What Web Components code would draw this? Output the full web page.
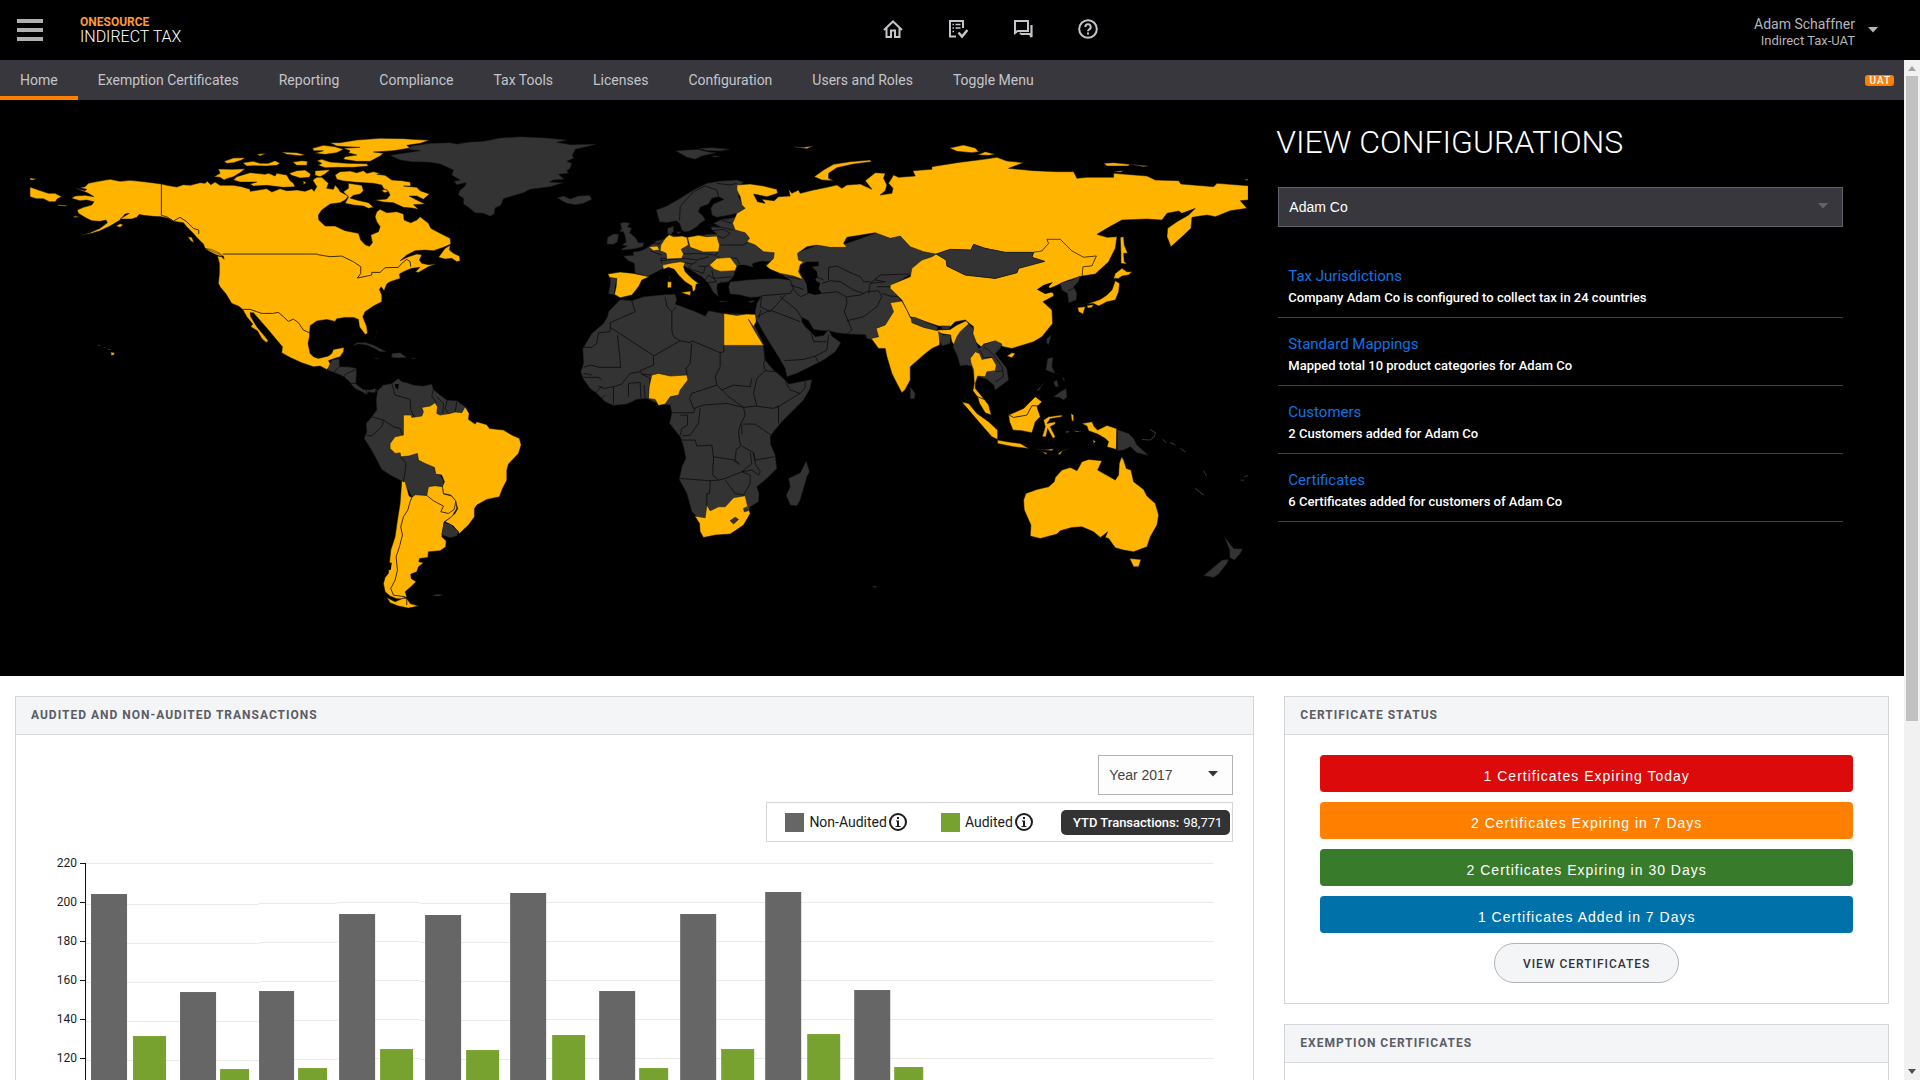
<!DOCTYPE html>
<html lang="en">
<head>
<meta charset="utf-8">
<title>ONESOURCE Indirect Tax</title>
<style>
html,body{margin:0;height:100%;background:#fff}
body{font-family:Roboto,"Liberation Sans",sans-serif;font-size:14px;color:#222}
</style>
</head>
<body>
<tax-app></tax-app>
<script>
const define = (name, html) => {
  const t = document.createElement('template');
  t.innerHTML = '<style>*{box-sizing:border-box}</style>' + html;
  customElements.define(name, class extends HTMLElement {
    constructor() {
      super();
      this.attachShadow({mode: 'open'}).append(t.content.cloneNode(true));
    }
  });
};

/* Icon button used in the top bar */
define('icon-button', `
<style>
:host{display:block}
button{display:block;width:20px;height:20px;padding:0;border:0;background:none;color:#c3c5cb}
</style>
<button type="button"><slot></slot></button>`);

define('top-bar', `
<style>
:host{display:block;background:#000;color:#b4b6bc}
header{display:grid;grid-template-columns:1fr auto 1fr;align-items:center;height:60px;padding:0 42px 0 17px}
.left{display:flex;align-items:center;gap:37px}
.menu{display:flex;flex-direction:column;justify-content:space-between;width:26px;height:22px;padding:0;border:0;background:none}
.menu i{display:block;height:4px;background:#b0b0b0}
.brand{display:flex;flex-direction:column}
.brand b{font-size:12px;line-height:14px;color:#ff9933}
.brand span{font-size:16px;font-weight:300;line-height:16px;color:#fff}
nav{display:flex;gap:45px;padding:0 0 2px 85px}
.user{justify-self:end;display:flex;align-items:center;gap:13px;padding:0;border:0;background:none;color:inherit;font:inherit;text-align:right}
.user div{padding-top:4px}
.user span{display:block;font-size:14px;line-height:18px}
.user small{display:block;font-size:13px;line-height:16px}
svg{display:block}
</style>
<header>
 <div class="left">
  <button class="menu" type="button" aria-label="Menu"><i></i><i></i><i></i></button>
  <div class="brand"><b>ONESOURCE</b><span>INDIRECT TAX</span></div>
 </div>
 <nav aria-label="Tools">
  <icon-button><svg width="20" height="20" viewBox="0 0 20 20" fill="none" stroke="currentColor" stroke-width="2"><path d="M1 11 10 2.5l9 8.500M3.500 9v9H8v-6.500h4V18h4.500V9"/></svg></icon-button>
  <icon-button><svg width="20" height="20" viewBox="0 0 20 20" fill="none" stroke="currentColor" stroke-width="2"><path d="M15 9V2H2v15.500h6"/><path d="M10.500 13.500l3.500 4L19.500 11" stroke-width="2.500"/><path d="M4.500 5.500h1.500m1.500 0h5M4.500 9h1.500m1.500 0h5M4.500 12.500h1.500" stroke-width="1.500"/></svg></icon-button>
  <icon-button><svg width="20" height="20" viewBox="0 0 20 20" fill="none" stroke="currentColor" stroke-width="2"><path d="M2 11.500V2h13v10H4.500L2 14z"/><path d="M18.500 6v10M8 15h9l1.500 3v-4M8 15l-1-1" stroke-width="2.200"/></svg></icon-button>
  <icon-button><svg width="20" height="20" viewBox="0 0 20 20" fill="none" stroke="currentColor" stroke-width="2"><circle cx="10" cy="10" r="8.800"/><path d="M7.300 8a2.700 2.700 0 1 1 4 2.300c-.9.500-1.300.9-1.300 2M10 13.500v2"/></svg></icon-button>
 </nav>
 <button class="user" type="button">
  <div><span>Adam Schaffner</span><small>Indirect Tax-UAT</small></div>
  <svg width="10" height="6" viewBox="0 0 10 6"><path d="M0 0h10L5 5.500z" fill="#b4b6bc"/></svg>
 </button>
</header>`);

define('main-nav', `
<style>
:host{display:block;background:#37373d}
nav{display:flex;align-items:center;height:40px;padding-right:10px}
a{display:block;height:40px;padding:0 20px;font-size:14px;line-height:40px;color:#c4c5ca;text-decoration:none;white-space:nowrap}
a.on{box-shadow:inset 0 -4px #ff8000}
span{margin-left:auto;padding:0 3px 0 4px;border-radius:3px;background:#ff8000;color:#fff;font-size:10px;font-weight:500;line-height:11px;letter-spacing:1px}
</style>
<nav aria-label="Main">
 <a class="on" href="#">Home</a><a href="#">Exemption Certificates</a><a href="#">Reporting</a><a href="#">Compliance</a><a href="#">Tax Tools</a><a href="#">Licenses</a><a href="#">Configuration</a><a href="#">Users and Roles</a><a href="#">Toggle Menu</a>
 <span>UAT</span>
</nav>`);

/* World map. Units are thirds of a pixel; each region has its own origin. */
define('world-map', `
<style>
:host{display:block}
svg{display:block;width:100%;height:auto}
.y{fill:#ffb400}.g{fill:#333}.k{fill:#000}
.y,.g{stroke:#111;stroke-width:1.500}
.l{fill:none;stroke:#0b0b0b;stroke-width:2.400;stroke-linejoin:round}
.t{fill:none;stroke:#333;stroke-width:3}
</style>
<svg viewBox="90 300 3654 1728" role="img" aria-label="World map of configured countries">
<g transform="translate(60 360)">
<path class="y" d="M166,204L195,212 200,208 180,203 195,200 205,190 235,184 270,178 300,184 330,181 360,184 395,188 424,192 440,196 470,201 490,194 510,196 540,188 555,190 562,184 572,194 585,186 600,196 640,196 665,200 690,208 690,214 715,210 740,206 755,216 780,206 800,212 830,210 855,214 875,206 882,214 890,200 878,180 890,172 905,172 925,190 920,205 940,208 945,196 955,206 960,215 985,228 975,240 960,248 930,252 905,270 895,285 896,300 915,318 945,318 975,332 1015,340 1022,360 1035,374 1048,379 1057,368 1052,345 1075,335 1080,320 1070,305 1065,290 1070,275 1080,268 1100,278 1130,275 1150,282 1152,300 1172,308 1190,300 1200,290 1225,310 1232,325 1260,340 1290,355 1292,372 1270,382 1240,392 1215,390 1185,392 1160,405 1140,422 1165,410 1190,402 1205,404 1198,420 1205,430 1225,434 1247,432 1225,440 1195,457 1186,455 1200,442 1175,445 1150,455 1138,462 1140,475 1110,485 1100,492 1092,512 1083,500 1078,508 1085,525 1085,545 1060,558 1035,575 1028,590 1040,620 1042,640 1035,643 1018,620 1015,598 1000,592 975,592 950,596 945,604 920,598 890,603 870,617 868,650 864,670 870,700 880,710 895,715 925,708 935,700 940,688 972,682 970,695 960,710 940,716 925,722 935,738 920,748 900,738 880,740 845,728 810,712 785,698 787,680 770,660 745,630 715,595 700,578 690,578 692,590 710,620 735,650 745,663 738,667 725,655 712,632 692,620 698,612 680,590 668,568 655,558 635,550 618,522 600,500 595,490 598,460 598,430 592,408 605,410 612,418 610,408 580,395 555,385 550,372 540,362 530,352 515,335 500,320 490,308 460,304 445,295 424,290 400,289 370,286 358,283 350,292 335,297 300,297 328,280 315,282 300,300 270,318 240,332 215,340 183,346 210,338 240,325 262,308 258,300 240,304 215,302 200,295 175,280 172,270 190,262 215,255 222,245 200,240 180,242 155,235 165,228 195,226 222,230 205,220Z
M30,201L55,210 85,220 105,220 125,230 112,236 106,245 88,245 70,236 50,236 30,230ZM30,174L48,176 40,180 30,180ZM112,254L138,256 140,259 115,257ZM160,288L178,290 165,293ZM288,318L300,311 310,314 300,322ZM503,350L515,352 522,368 512,362ZM555,386L575,388 600,400 607,410 590,405 570,395ZM1255,412L1275,385 1290,376 1288,390 1300,400 1318,408 1320,422 1310,425 1295,415 1275,417Z
M272,696L283,698 282,705 274,706ZM262,686L272,688 268,690ZM234,674L240,676 236,678ZM250,681L256,683 254,684Z
M930,68L960,68 1010,60 1080,55 1150,56 1228,61 1200,70 1160,76 1170,84 1120,92 1060,96 1090,100 1080,108 1050,124 1010,124 970,118 975,110 1010,105 985,98 990,92 970,85 1020,82 980,80 950,78Z
M878,85L910,76 945,80 970,88 950,98 915,103 885,100 910,92 880,92ZM905,118L930,126 980,130 1040,131 1045,138 1000,142 950,142 915,143 895,136 905,130 890,122Z
M595,147L640,148 675,146 660,158 640,170 620,176 612,180 600,172 582,170 600,160ZM640,180L650,170 690,158 735,163 745,160 765,168 770,160 800,165 810,182 820,190 825,200 790,202 740,196 700,198 690,192 710,186 660,186Z
M668,128L700,124 720,130 745,130 765,122 780,130 770,136 740,138 700,137 680,138ZM612,124L640,114 675,113 665,120 640,128 620,130ZM710,103L738,100 720,108ZM785,96L830,98 855,104 840,107 800,103ZM818,126L845,122 862,124 860,136 830,136ZM808,160L830,152 855,150 872,162 868,172 840,174 815,166ZM885,152L930,149 915,162 900,170 885,166ZM850,182L858,188 850,194Z
M945,165L960,155 990,153 1010,158 1030,152 1040,160 1060,155 1080,160 1070,163 1095,166 1115,180 1145,182 1170,186 1172,198 1150,198 1190,202 1200,212 1228,222 1210,238 1190,228 1167,228 1190,240 1215,252 1180,254 1195,268 1175,264 1150,262 1120,248 1090,246 1065,240 1100,237 1110,225 1105,215 1090,205 1085,195 1060,190 1010,187 970,183 950,178Z
M985,190L1000,192 1025,196 1030,212 1020,222 1000,226 990,234 1010,240 1045,248 1060,262 1045,265 1030,258 1000,255 975,250 985,232 970,215 985,205ZM1085,210L1100,208 1105,215 1092,218Z"/>
<path class="l" d="M424,192V286L440,290 460,303 480,292 500,305 520,325 536,330 536,342M608,402H890L895,404 930,410 965,408 1000,425 1022,440 1022,460 1012,474 1055,465 1055,457 1080,457 1095,443 1135,442 1145,430 1160,418 1170,425 1172,440M668,568L690,568 725,580 758,580 775,577 790,590 805,604 820,597 835,608 850,630 868,638"/>
<path class="g" d="M997,677L1010,668 1035,667 1060,675 1085,688 1100,695 1080,695 1065,686 1040,675 1015,672ZM1115,700L1140,698 1160,712 1135,714 1115,712ZM1063,713L1078,716 1068,717ZM1175,713L1188,716 1176,717ZM1068,628L1072,640ZM1062,645L1068,655Z"/>
</g>
<g transform="translate(1020 360)">
<path class="g" d="M150,106L200,98 240,92 200,88 215,78 270,70 330,68 350,72 390,66 430,64 480,54 540,50 620,54 680,60 650,67 690,74 770,72 740,80 705,88 697,105 700,115 680,124 695,130 690,145 680,152 685,160 655,163 672,178 640,180 628,186 670,188 630,200 570,208 550,218 490,236 482,256 465,264 462,282 450,289 430,280 405,278 385,262 370,252 370,235 355,225 358,212 375,198 378,188 350,194 342,184 360,180 335,165 340,150 300,132 270,127 215,125 180,120ZM652,233L670,228 690,237 715,228 748,226 755,238 730,250 705,254 680,250 665,242Z
M-25,720L-2,716 -2,740 25,740 50,745 47,790 55,798 70,808 90,810 105,805 112,812 100,818 85,815 80,824 65,815 45,805 35,795 28,785 12,770 -10,760 -38,750Z
M112,812L130,795 155,790 175,775 185,785 200,788 220,795 250,798 275,792 280,808 300,825 320,840 350,842 375,860 385,890 300,900 250,1000 310,1080 310,1110 260,1125 215,1130 205,1110 185,1083 150,1065 125,1048 105,1010 85,975 72,955 80,935 78,910 95,890 110,870 108,840ZM277,1428L290,1422 308,1425 300,1428Z"/>
<path class="y" d="M185,1083L195,1085 207,1128 215,1132 225,1124 260,1126 265,1100 285,1097 307,1100 310,1122 335,1128 347,1142 350,1165 335,1190 312,1205 308,1230 305,1250 318,1262 317,1280 300,1292 265,1295 263,1312 238,1315 236,1325 250,1328 235,1340 230,1355 212,1362 213,1375 228,1385 212,1400 195,1415 200,1430 185,1436 170,1436 150,1428 135,1415 130,1390 135,1372 145,1360 148,1330 152,1290 165,1250 172,1200 180,1150ZM140,1432L165,1445 190,1434 200,1435 210,1450 235,1458 205,1464 175,1458 150,1448Z
M190,885L213,885 215,892 245,888 250,875 245,862 270,858 285,848 292,860 290,880 300,885 330,880 345,876 365,878 375,860 387,880 385,898 405,912 410,905 440,914 448,925 490,930 515,945 538,955 543,975 535,1000 505,1032 500,1050 500,1080 485,1110 478,1130 440,1138 410,1155 403,1165 403,1190 385,1215 358,1240 340,1218 315,1205 345,1180 353,1165 345,1140 332,1125 310,1120 307,1100 313,1085 305,1065 287,1062 283,1042 255,1030 235,1020 232,1000 205,1008 182,1010 180,998 165,1000 150,985 150,970 165,950 190,945Z"/>
<path class="g" d="M312,1207L330,1212 356,1235 350,1248 330,1253 305,1245Z"/>
<path class="k" d="M165,792L176,792 174,808 166,803ZM145,1328L155,1328 152,1350 142,1348Z"/>
<path class="l" d="M215,1132L210,1145 203,1170 190,1190 182,1220 187,1245 178,1280 168,1310 172,1350 165,1380 152,1405 160,1425 195,1430M260,1126L280,1142 310,1158 302,1175 325,1180 342,1168 347,1145M200,1435V1455M155,790L165,825 210,838 212,870 222,890M280,808L275,828 290,850M290,830L310,850 308,880M322,840L315,865 325,880M350,845L345,876M95,890L130,900 160,920 180,925 187,943M130,900L125,920 95,948 80,945M182,1010L198,1030 195,1055 190,1085M-2,740L-20,758M50,748L20,760 10,772M30,790L48,790M78,808L80,820M108,806L106,818"/>
</g>
<g transform="translate(1710 390)">
<path class="g" d="M150,280L165,277 180,280 172,290 185,295 178,308 195,322 205,338 222,338 218,350 195,356 160,360 152,358 172,348 155,346 168,336 165,320 160,305 148,305 155,295ZM112,322L130,312 145,312 142,335 130,343 110,342Z
M258,240L290,228 330,205 370,180 410,160 450,153 500,150 520,156 510,165 505,200 525,235 500,250 480,255 440,262 425,255 422,235 430,222 462,208 445,200 425,205 415,222 390,232 385,245 400,260 405,270 390,280 378,292 360,302 345,306 335,300 328,280 318,272 290,278 268,275ZM292,295L310,288 310,305 300,315 292,310ZM318,305L332,305 325,312Z
M316,62L350,60 385,58 415,66 440,68 395,78 375,88 350,82ZM385,55L430,53 480,58 450,63 410,62ZM422,77L450,78 435,82Z
M160,378L190,376 188,366 215,362 235,350 250,340 260,332 280,328 290,330 295,314 330,320 350,322 385,320 410,313 440,312 425,300 422,290 450,290 430,280 455,268 480,265 500,260 540,330 620,370 690,365 740,345 830,340 920,308 990,318 1100,370 1025,430 960,470 1000,520 960,600 905,630 890,625 885,614 830,612 800,608 775,602 760,602 730,598 715,572 695,562 695,575 705,590 722,605 735,620 760,616 775,598 785,618 812,638 795,665 760,690 720,710 680,730 650,740 645,715 625,680 590,625 570,590 556,565 555,545 560,520 572,500 540,502 510,495 480,492 475,470 480,455 530,450 570,447 620,445 660,450 630,430 600,415 585,405 600,395 575,393 555,398 545,402 550,412 525,405 505,405 495,420 490,440 475,455 455,458 442,460 440,475 445,500 428,485 418,465 405,450 395,440 370,425 345,410 320,402 280,415 255,428 230,440 205,432 195,430 192,400 175,392ZM120,442L140,445 135,470 132,493 115,492 120,465ZM296,438L301,440 299,450ZM448,512L475,514 450,516ZM532,515L555,510 545,518Z
M150,508L185,512 220,500 270,495 315,492 320,510 315,522 350,535 370,542 405,558 415,542 460,550 530,552 556,553 545,570 560,600 580,640 585,690 610,720 640,745 655,762 725,748 720,775 700,810 665,845 635,875 610,905 600,920 602,945 615,975 620,1015 590,1045 560,1070 567,1090 565,1115 540,1130 535,1150 500,1200 410,1215 385,1165 365,1145 350,1090 327,1048 335,1010 347,985 340,950 330,920 298,880 305,848 300,825 265,822 230,805 200,808 170,822 130,826 105,815 80,790 60,775 38,745 32,725 40,700 38,655 65,610 100,580 112,560 115,545Z
M708,993L718,1025 710,1040 690,1110 680,1127 660,1125 648,1095 660,1070 655,1045 690,1028ZM1020,770L1035,790 1033,806 1020,806Z"/>
<path class="k" d="M690,405L710,395 745,395 745,408 725,410 740,425 742,440 735,450 750,460 745,475 755,490 735,495 712,488 710,465 700,445 688,425Z"/>
<path class="l" d="M328,272L330,230 345,212 370,185 405,168 440,180 445,200M440,160L480,165 500,160M425,290L455,292 490,300M425,302L460,298 480,310 460,325 442,318M455,270L485,280M445,345L520,345 535,335M445,365L435,375 450,385M340,372L380,370 410,372 435,375M270,392L310,388 345,385 380,390 415,380M275,400L272,385 288,385M345,398L365,402 380,395M365,402L355,415 400,430 405,410 385,408M405,410L420,405M405,450L415,435 430,445 440,455 410,458M425,420L430,445 490,440M262,348L275,330M240,362L275,375M250,340L270,340M480,382L500,385 508,402M460,458L450,455M660,450L670,475 660,490 575,497M650,440L690,448M660,465L700,478M575,497L570,530M570,530L600,545 645,495M560,560L590,545 600,540 690,575M572,540L565,565M630,500L680,540 695,565M670,478L690,500 715,490M755,490L800,485 828,500 830,520 822,545 845,600 830,612M830,500L870,495 890,485 925,482 935,500 920,530 880,560 830,572M935,490L960,498 990,500M775,450V412L800,408 850,432 870,440 880,455 900,455M755,460L780,452 810,455 850,480 880,490M895,490L900,460 930,435 1015,432M900,460L945,455 915,450 920,445M920,470L960,470M740,440L760,450M642,692L700,688 735,678 770,660 775,615M735,678L745,698M722,605L730,635 770,635
M185,512L195,545 150,565 120,578V605L85,608 80,640 65,652H38M120,592L240,670 250,678 330,632 360,638M142,615L152,712H90L60,705 40,712M285,500L290,530 305,545 305,600 310,620 330,632M305,545L318,530M360,638L365,632 450,668 461,665V646M365,640L360,700 348,715 350,735M450,668V710L435,740 440,765 365,790 358,805 370,835M250,678V705L210,722 215,732 245,735M210,725L180,730 160,755 155,762 130,770M215,732L240,745 235,805M175,800V760L210,757 212,805M222,765L225,805M60,775L40,770M38,742H85L95,750M40,730L65,735M85,768L100,775 130,770 130,822M75,790L95,768M95,805L105,795M440,765L455,780 490,765 540,770 545,745M455,780L475,800 520,832 555,828 610,835 625,828V880M580,646L585,690 580,700 585,722 560,745 550,790 560,828M585,722L620,725 640,745M645,755L660,780 690,790 620,832M690,790L705,772V755M370,835L400,825 470,820 520,832 525,855 510,885 505,905 510,945 550,968 555,990 612,980M520,882L555,882 602,915M305,848H370L375,835M330,855L352,855 352,885 335,895 330,915M390,835L385,880 360,915 335,918M332,930L375,930 380,948 425,945 430,980 495,990 498,958 510,950M430,980V1000H428V1035L445,1050 420,1052 327,1045M495,990L508,1002 490,992M445,1050L465,1045 515,1025 545,1020 565,1035 570,1025 555,1000 550,968M465,1050L495,1090 520,1095 540,1060V1035L515,1025M420,1052L418,1090H410V1160M540,968L545,1000 515,1025M515,882L515,912"/>
<path class="y" d="M113,432L150,426 190,430 237,440 215,450 205,470 185,495 150,503 133,493 138,470 140,445 118,442ZM277,405L300,400 330,395 345,398 340,410 345,425 365,445 385,460 392,460 378,462 375,480 368,485 365,468 345,455 325,435 312,418 295,412 280,418ZM333,487L362,483 360,496 345,492ZM292,455L304,455 303,472 292,474Z
M272,345L285,325 297,314 310,320 335,318 350,322 355,345 333,358 340,372 335,385 290,387 288,370 270,362ZM235,350L262,348 268,360 250,362ZM352,322L385,316 408,320 440,318 448,345 445,365 400,366 360,352ZM418,405L440,385 480,382 500,408 495,422 450,424 432,418Z
M461,550L500,556 530,552 556,553 558,575 550,590 535,568 552,600 580,646 461,646ZM245,735L265,730 300,738 350,735 353,750 330,780 325,795 300,800 285,822 265,826 255,808 235,805 237,770ZM374,1158L405,1163 410,1125 420,1142 445,1130 465,1130 490,1103 525,1097 532,1128 540,1150 520,1185 480,1212 435,1215 400,1222 390,1205 388,1180Z
M500,165L540,162 580,168 620,178 622,190 590,200 550,192 562,215 585,220 575,208 612,212 625,200 660,198 655,178 665,190 685,180 690,190 730,180 770,172 800,165 815,175 830,165 870,162 905,178 895,165 885,152 915,128 945,130 940,145 950,165 945,182 930,195 965,190 968,175 955,160 970,135 985,142 1035,138 1028,122 1085,118 1085,110 1160,98 1240,88 1280,82 1310,93 1360,98 1315,115 1390,122 1460,125 1510,125 1520,145 1550,142 1630,142 1630,130 1730,138 1755,150 1825,152 1832,162 1930,170 1940,160 2034,167 2034,210 2010,212 2030,235 1980,242 1935,260 1910,255 1865,262 1862,295 1830,325 1802,350 1790,320 1792,295 1820,275 1855,255 1875,235 1835,250 1825,243 1790,250 1775,270 1730,267 1655,270 1615,292 1580,313 1610,322 1640,320 1635,355 1615,395 1575,432 1535,438 1538,410 1565,407 1578,378 1540,382 1505,363 1470,328 1430,328 1435,340 1415,363 1390,367 1305,367 1245,355 1210,343 1202,360 1140,358 1098,372 1060,365 1020,350 990,318 960,325 915,308 830,322 820,340 830,352 780,352 740,345 710,350 682,370 685,390 700,395 690,405 685,425 698,448 670,438 630,430 600,418 588,408 610,385 612,368 580,365 555,345 530,335 538,325 525,308 495,300 487,280 500,250 525,235 515,225 510,200 500,180Z
M732,140L760,120 790,103 840,95 900,90 903,95 850,102 800,113 775,130 775,145 790,152 755,150ZM670,50L700,52 728,48 710,56Z"/>
<path class="g" d="M480,1172L495,1161 505,1168 490,1182ZM520,1135L530,1130 535,1142 522,1145Z"/>
</g>
<g transform="translate(2580 360)">
<path class="y" d="M228,402L258,420 260,438 315,465 405,475 470,458 475,445 553,424 515,412 520,397 545,393 565,370 560,358 600,358 635,393 670,412 708,408 695,437 668,440 665,468 620,482 580,500 560,508 580,520 580,528 548,545 575,570 577,610 545,650 520,665 455,685 430,680 400,665 370,672 365,682 345,665 335,640 340,620 315,600 285,605 270,620 235,618 150,590 135,560 125,540 90,505 90,495 150,470 155,445 185,420 215,410ZM440,708L455,698 465,700 455,713Z
M760,475L765,460 785,445 800,455 815,455 805,465 785,468 775,475ZM765,482L778,490 775,515 765,540 740,545 715,558 700,550 680,552 720,538 740,525 755,510ZM652,562L675,560 668,582 655,575ZM680,556L700,554 695,562 682,564ZM780,352L790,350 792,375 802,400 790,400 792,425 800,432 782,430 782,400Z
M90,548L125,543 140,570 150,592 160,600 232,630 270,628 290,615 318,602 328,615 300,640 285,680 275,665 270,645 240,640 238,675 215,685 190,705 150,740 150,780 135,808 125,818 110,790 95,760 80,710 75,685 55,685 33,655 55,650 48,625 75,615 100,575Z"/>
<path class="g" d="M228,402L270,388 332,390 340,373 375,385 435,397 520,397 515,412 553,424 475,445 470,458 405,475 315,465 260,438 258,420ZM600,490L635,480 660,468 655,485 640,500 650,520 648,540 625,548 622,520 605,510ZM560,655L573,645 565,675 558,668ZM152,592L165,592 200,607 232,620 232,632 190,622 155,608ZM243,618L270,618 268,628 245,627ZM235,635L250,645 272,645 270,670 255,675 245,678 238,660Z
M278,680L290,650 300,635 325,612 340,625 338,640 355,685 375,672 405,662 425,672 420,685 405,700 440,745 445,780 425,795 405,810 400,795 380,778 355,770 345,790 335,740 320,735 300,738 290,705Z
M770,928L805,940 820,955 830,975 865,1006 830,998 810,980 790,990 770,992ZM562,715L578,712 575,740 585,760 600,765 570,755 557,750ZM580,785L590,780 595,800 585,800ZM605,770L612,775 612,785ZM580,830L600,815 618,805 620,830 610,840 598,832ZM530,810L552,788 535,812ZM608,990L628,985 610,993ZM497,855L510,848 505,858Z
M1092,1250L1112,1275 1120,1285 1147,1287 1140,1300 1122,1320 1108,1312 1108,1290ZM1105,1318L1100,1330 1075,1362 1060,1372 1030,1366 1050,1350 1085,1320ZM36,1397L52,1400 42,1404ZM1138,1080L1150,1078 1150,1084Z"/>
<path class="t" d="M845,958L870,960 882,950 885,938 870,928M1005,1105L1030,1125M1152,1070L1164,1066M908,958L918,968M930,968L945,974M960,985L975,996M1030,1052L1038,1066"/>
<path class="y" d="M330,715L345,695 358,700 365,718 395,712 408,735 405,752 380,755 375,770 352,768 345,790 345,805 370,835 385,855 393,885 375,878 358,850 352,830 338,812 342,790 340,750 332,728ZM305,846L325,850 350,880 385,905 412,930 412,958 395,950 360,910 330,875ZM412,960L440,965 480,970 505,985 460,980 412,970ZM525,986L550,990 580,986 575,992 555,990ZM592,1002L608,990 600,1003ZM545,995L560,998 558,1003Z
M445,885L490,865 525,830 545,845 530,860 540,890 525,905 515,938 485,932 458,930 448,905ZM550,900L565,890 605,885 605,890 570,896 560,910 585,905 585,912 570,920 585,950 578,955 562,925 557,950 546,950 555,920ZM632,880L640,885 640,905 634,900ZM617,934L628,934 620,938ZM640,932L662,934 650,936ZM665,910L695,905 702,920 712,930 740,916 770,926 768,988 740,980 745,965 735,955 712,942 685,932 680,918ZM698,958L706,965 700,970Z
M497,1120L530,1108 565,1100 582,1085 585,1072 605,1050 630,1042 650,1052 665,1025 685,1018 725,1022 712,1050 765,1080 775,1065 777,1030 784,1010 790,1020 798,1045 812,1050 820,1085 850,1108 860,1128 885,1150 895,1185 890,1215 870,1250 860,1280 820,1295 790,1290 765,1283 745,1255 735,1252 742,1235 730,1245 720,1252 700,1235 665,1220 635,1222 600,1232 590,1242 540,1255 510,1248 512,1215 492,1170 490,1140ZM808,1315L842,1318 835,1340 820,1340Z
M268,84L310,75 345,84 355,95 335,98 290,94ZM352,105L375,95 405,103 385,106ZM730,130L760,128 808,133 805,138 740,138ZM808,133L865,138 850,140ZM760,154L790,152 780,157ZM1155,178h9v3h-9Z"/>
<path class="k" d="M530,508L550,495 578,486 565,500 580,515 555,522Z"/>
<path class="l" d="M447,885L460,892 500,885 515,857 535,857M352,830L372,838M622,512L640,505M358,690L372,715M370,680L385,690 400,705 425,740 430,770 405,785M408,755L428,752M375,712L395,712M770,926V990"/>
</g>
</svg>`);

/* Drop-down with a caret drawn over its right end */
define('pick-list', `
<style>
:host{display:grid;color:#fff;background:#37373d;border:1px solid #62626e;--caret:#62626e}
:host([light]){color:#444;background:#fdfdfd;border-color:#b0b2b6;--caret:#33343a}
select,svg{grid-area:1/1}
select{appearance:none;width:100%;height:38px;padding:0 10px;border:0;background:none;color:inherit;font:14px "Liberation Sans",sans-serif}
svg{align-self:center;justify-self:end;margin:0 14px 2px 0;pointer-events:none}
</style>
<select></select>
<svg width="10" height="6" viewBox="0 0 10 6"><path d="M0 0h10L5 5.500z" fill="var(--caret)"/></svg>`);

define('config-item', `
<style>
:host{display:block;height:68px;padding:17px 10px 0;border-bottom:1px solid #404040}
a{display:block;font-size:15px;line-height:18px;color:#0f75e0;text-decoration:none}
p{margin:4px 0 0;font-size:13px;font-weight:500;line-height:18px;color:#fff}
</style>
<a href="#"><slot name="title"></slot></a><p><slot></slot></p>`);

define('config-panel', `
<style>
:host{display:block;padding:22px 61px 0 9px}
h1{margin:0 0 25px -2px;font-size:32px;font-weight:300;line-height:40px;color:#fff}
div{padding-top:23px}
</style>
<h1>VIEW CONFIGURATIONS</h1>
<pick-list label="Company" value="Adam Co"></pick-list>
<div>
<config-item><span slot="title">Tax Jurisdictions</span>Company Adam Co is configured to collect tax in 24 countries</config-item>
<config-item><span slot="title">Standard Mappings</span>Mapped total 10 product categories for Adam Co</config-item>
<config-item><span slot="title">Customers</span>2 Customers added for Adam Co</config-item>
<config-item><span slot="title">Certificates</span>6 Certificates added for customers of Adam Co</config-item>
</div>`);

define('panel-card', `
<style>
:host{display:block;border:1px solid #d3d5d9;background:#fff}
h2{margin:0;padding:0 15px;height:38px;border-bottom:1px solid #d8dadd;background:#f4f5f7;color:#5b5c65;font-size:12px;font-weight:700;line-height:36px;letter-spacing:1px}
</style>
<h2><slot name="title"></slot></h2><slot></slot>`);

define('chart-legend', `
<style>
:host{display:flex;align-items:center;justify-content:flex-end;height:40px;padding:0 2px 0 18px;border:1px solid #d3d5d9;font-size:13px;color:#1c1c1c}
span{display:flex;align-items:center}
.key{font-size:14px}
i{width:19px;height:19px;margin-right:5px;background:#666}
.a{margin-left:34px}.a i{background:#78a22f}
svg{margin-left:2px}
p{display:flex;align-items:center;gap:4px;margin:0 0 0 28px;height:25px;padding:0 8px 0 12px;border-radius:5px;background:#333;color:#fff}
b{font-weight:500}
</style>
<span class="key"><i></i>Non-Audited<svg width="18" height="18" viewBox="0 0 18 18"><circle cx="9" cy="9" r="8" fill="none" stroke="#1c1c1c" stroke-width="2"/><path d="M8 4h2v2H8zM7 7.500h3V13h1.500v1h-5v-1H8V8.500H7z" fill="#1c1c1c"/></svg></span>
<span class="key a"><i></i>Audited<svg width="18" height="18" viewBox="0 0 18 18"><circle cx="9" cy="9" r="8" fill="none" stroke="#1c1c1c" stroke-width="2"/><path d="M8 4h2v2H8zM7 7.500h3V13h1.500v1h-5v-1H8V8.500H7z" fill="#1c1c1c"/></svg></span>
<p><b>YTD Transactions:</b><span>98,771</span></p>`);

define('bar-chart', `
<style>
:host{display:block}
svg{display:block;width:100%;height:auto}
text{font-size:12px;text-anchor:end;fill:#1c1c1c}
.grid{fill:none;stroke:#ebebeb;stroke-width:1}
.axis{fill:none;stroke:#111;stroke-width:1}
.n{fill:#666}.a{fill:#78a22f}
</style>
<svg viewBox="16 853 1237 260" role="img" aria-label="Transactions by month">
<path class="grid" d="M86 863.500H1213"/>
<g class="grid" id="lines"></g>
<g id="bars"></g>
<path class="axis" d="M85.500 863V1113M80 863.500h6M80 902.500h6M80 941.500h6M80 980.500h6M80 1019.500h6M80 1058.500h6"/>
<text x="77" y="867">220</text><text x="77" y="906">200</text><text x="77" y="945">180</text><text x="77" y="984">160</text><text x="77" y="1023">140</text><text x="77" y="1062">120</text>
</svg>`);

define('status-button', `
<style>
:host{display:block}
button{display:block;width:100%;height:37px;padding:4px 0 0;border:0;border-radius:4px;background:var(--tone);color:#fff;font:14px "Liberation Sans",sans-serif;letter-spacing:1px}
</style>
<button type="button"><slot></slot></button>`);

define('page-scroll', `
<style>
:host{display:flex;flex-direction:column;justify-content:space-between;flex:none;width:16px;padding:6px 2px;background:#f1f1f1}
i{display:block;flex:0 0 645px;margin-top:5px;background:#c1c1c1}
svg{display:block;flex:none;margin:0 auto}
svg:last-child{margin-top:auto}
</style>
<svg width="8" height="5" viewBox="0 0 8 5"><path d="M0 5h8L4 0z" fill="#a3a3a3"/></svg><i></i>
<svg width="8" height="5" viewBox="0 0 8 5"><path d="M0 0h8L4 5z" fill="#505050"/></svg>`);

define('tax-app', `
<style>
:host{display:flex;flex-direction:column;height:100vh;overflow:hidden}
.body{display:flex;flex:1;min-height:0}
main{flex:1;min-width:0;overflow:hidden}
.hero{display:grid;grid-template-columns:2fr 1fr;background:#000}
world-map{padding:0 21px 0 30px}
.row{display:grid;grid-template-columns:2fr 1fr;padding-top:20px}
.col{display:flex;flex-direction:column;gap:20px;padding:0 15px}
.tools{display:flex;flex-direction:column;align-items:flex-end;gap:7px;padding:20px 20px 11px}
.tools pick-list{width:135px}
.status{display:flex;flex-direction:column;gap:10px;padding:20px 35px}
.view{align-self:center;width:185px;height:40px;border:1px solid #b0b2b6;border-radius:20px;background:#f4f5f7;color:#33343a;font:500 12px Roboto,sans-serif;letter-spacing:1px;padding:2px 0 0}
.empty{height:200px}
</style>
<top-bar></top-bar>
<div class="body">
<main>
 <main-nav></main-nav>
 <section class="hero"><world-map></world-map><config-panel></config-panel></section>
 <section class="row">
  <div class="col"><panel-card><span slot="title">AUDITED AND NON-AUDITED TRANSACTIONS</span>
   <div class="tools"><pick-list light label="Year" value="Year 2017"></pick-list><chart-legend></chart-legend></div>
   <bar-chart></bar-chart></panel-card></div>
  <div class="col"><panel-card><span slot="title">CERTIFICATE STATUS</span>
   <div class="status">
    <status-button style="--tone:#dc0a0a">1 Certificates Expiring Today</status-button>
    <status-button style="--tone:#ff8000">2 Certificates Expiring in 7 Days</status-button>
    <status-button style="--tone:#387c2b">2 Certificates Expiring in 30 Days</status-button>
    <status-button style="--tone:#0072a9">1 Certificates Added in 7 Days</status-button>
    <button class="view" type="button">VIEW CERTIFICATES</button>
   </div></panel-card>
   <panel-card><span slot="title">EXEMPTION CERTIFICATES</span><div class="empty"></div></panel-card></div>
 </section>
</main>
<page-scroll aria-hidden="true"></page-scroll>
</div>`);

const deep = (root, sel) => [...root.querySelectorAll('*')].flatMap(e =>
  [...(e.matches(sel) ? [e] : []), ...(e.shadowRoot ? deep(e.shadowRoot, sel) : [])]);

for (const p of deep(document, 'pick-list')) {
  const s = p.shadowRoot.querySelector('select');
  s.setAttribute('aria-label', p.getAttribute('label'));
  s.add(new Option(p.getAttribute('value')));
}

/* [x, top, width] of each bar, by series */
const series = {
  n: [[91,894,36],[180,992,36],[259,991,35],[339,914,36],[425,915,36],[510,893,36],[599,991,36],[680,914,36],[765,892,36],[854,990,36]],
  a: [[133,1036,33],[220,1069,29],[298,1068,29],[380,1049,33],[466,1050,33],[552,1035,33],[639,1068,29],[721,1049,33],[807,1034,33],[894,1067,29]]
};
const steps = [[86,259,2],[259,337,1],[337,420,0],[420,510,1],[510,1213,0]];
for (const c of deep(document, 'bar-chart')) {
  let bars = '', d = '';
  for (const k in series) for (const [x, y, w] of series[k])
    bars += '<rect class="' + k + '" x="' + x + '" y="' + y + '" width="' + w + '" height="' + (1113 - y) + '"/>';
  for (let y = 902; y < 1113; y += 39)
    for (const [a, b, o] of steps) d += 'M' + a + ' ' + (y + o + 0.5) + 'H' + b;
  c.shadowRoot.getElementById('bars').innerHTML = bars;
  c.shadowRoot.getElementById('lines').innerHTML = '<path d="' + d + '"/>';
}
</script>
</body>
</html>
